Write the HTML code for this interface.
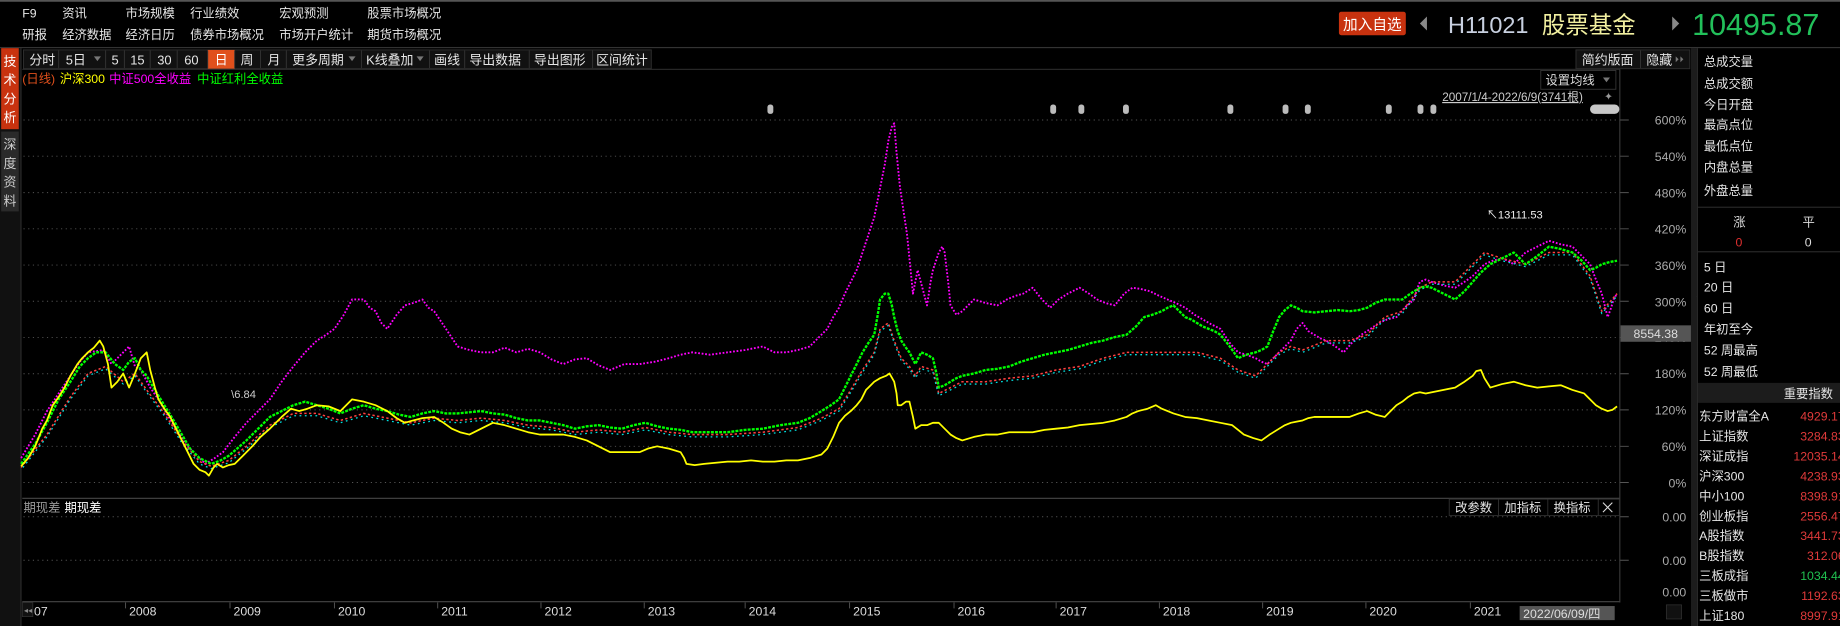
<!DOCTYPE html>
<html><head><meta charset="utf-8"><style>
html,body{margin:0;padding:0;background:#000;width:1840px;height:626px;overflow:hidden}
svg{display:block}
text{font-family:"Liberation Sans","Noto Sans CJK SC",sans-serif;font-size:10.5px}
</style></head><body>
<svg width="1840" height="626" viewBox="0 0 1568 533" preserveAspectRatio="none" xmlns="http://www.w3.org/2000/svg">
<rect width="1568" height="533" fill="#000"/>
<rect x="0" y="0" width="1568" height="1.5" fill="#555"/>
<g fill="#e6e6e6">
<text x="19" y="15">F9</text><text x="53" y="15">资讯</text><text x="107" y="15">市场规模</text><text x="162" y="15">行业绩效</text><text x="238" y="15">宏观预测</text><text x="313" y="15">股票市场概况</text>
<text x="19" y="33">研报</text><text x="53" y="33">经济数据</text><text x="107" y="33">经济日历</text><text x="162" y="33">债券市场概况</text><text x="238" y="33">市场开户统计</text><text x="313" y="33">期货市场概况</text>
</g>
<rect x="1141" y="10" width="57" height="20" rx="2" fill="#c8320f"/>
<text x="1169.5" y="25" fill="#fff" text-anchor="middle" style="font-size:12.5px">加入自选</text>
<path d="M1216 14 L1210 20 L1216 26Z" fill="#888"/>
<text x="1234" y="28" fill="#c8d0e0" style="font-size:20px">H11021</text>
<text x="1314" y="28" fill="#f2f0a0" style="font-size:20px">股票基金</text>
<path d="M1425 14 L1431 20 L1425 26Z" fill="#888"/>
<text x="1442" y="30" fill="#22c05a" style="font-size:26px">10495.87</text>
<rect x="0" y="40" width="1568" height="1" fill="#333"/>
<!-- sidebar -->
<rect x="0" y="41" width="18" height="492" fill="#111"/>
<rect x="17.5" y="41" width="0.8" height="492" fill="#333"/>
<rect x="1" y="41" width="15" height="69" fill="#c8320f"/>
<g fill="#fff"><text x="3" y="56" style="font-size:11px">技</text><text x="3" y="72" style="font-size:11px">术</text><text x="3" y="88" style="font-size:11px">分</text><text x="3" y="104" style="font-size:11px">析</text></g>
<rect x="1" y="112" width="15" height="68" fill="#2a2a2a"/>
<g fill="#ccc"><text x="3" y="127" style="font-size:11px">深</text><text x="3" y="143" style="font-size:11px">度</text><text x="3" y="159" style="font-size:11px">资</text><text x="3" y="175" style="font-size:11px">料</text></g>
<!-- toolbar -->
<g fill="#111" stroke="#2e2e2e" stroke-width="0.8">
<rect x="20" y="42.5" width="535" height="16"/>
<rect x="1343" y="42.5" width="97" height="16"/>
</g>
<rect x="177" y="42.5" width="23" height="16" fill="#e0501c"/>
<g stroke="#333" stroke-width="0.8">
<path d="M50 43v15M90 43v15M106 43v15M128 43v15M151 43v15M177 43v15M200 43v15M222 43v15M244 43v15M308 43v15M366 43v15M396 43v15M451 43v15M505 43v15M1398 43v15"/>
</g>
<g fill="#e6e6e6" style="font-size:11px">
<text x="25" y="55" style="font-size:11px">分时</text><text x="56" y="55" style="font-size:11px">5日</text><text x="95" y="55" style="font-size:11px">5</text><text x="111" y="55" style="font-size:11px">15</text><text x="134" y="55" style="font-size:11px">30</text><text x="157" y="55" style="font-size:11px">60</text><text x="183" y="55" fill="#fff" style="font-size:11px">日</text><text x="205" y="55" style="font-size:11px">周</text><text x="228" y="55" style="font-size:11px">月</text><text x="249" y="55" style="font-size:11px">更多周期</text><text x="312" y="55" style="font-size:11px">K线叠加</text><text x="370" y="55" style="font-size:11px">画线</text><text x="400" y="55" style="font-size:11px">导出数据</text><text x="455" y="55" style="font-size:11px">导出图形</text><text x="508" y="55" style="font-size:11px">区间统计</text>
<text x="1348" y="55" style="font-size:11px">简约版面</text><text x="1403" y="55" style="font-size:11px">隐藏</text>
</g>
<g fill="#777"><path d="M80 48l6 0l-3 4z"/><path d="M297 48l6 0l-3 4z"/><path d="M355 48l6 0l-3 4z"/><path d="M1428 48l2.5 2.5l-2.5 2.5zM1432 48l2.5 2.5l-2.5 2.5z"/></g>
<rect x="19" y="58.6" width="1361" height="0.8" fill="#333"/>
<!-- legend -->
<text x="19" y="70.5" fill="#e0501c">(日线)</text><text x="51" y="70.5" fill="#ffff00">沪深300</text><text x="93" y="70.5" fill="#ff00ff">中证500全收益</text><text x="168" y="70.5" fill="#00ff00">中证红利全收益</text>
<rect x="1313" y="60" width="64" height="16" fill="#000" stroke="#333" stroke-width="0.8"/>
<text x="1317" y="72" fill="#ddd">设置均线</text><path d="M1366 66l6 0l-3 4z" fill="#777"/>
<text x="1229" y="86" fill="#ccc" text-decoration="underline" style="font-size:10px">2007/1/4-2022/6/9(3741根)</text>
<text x="1367" y="85" fill="#999" style="font-size:9px">✦</text>
<rect x="1355" y="89" width="25" height="8" rx="4" fill="#c8c8c8"/>
<g fill="#bbb"><rect x="654" y="89" width="5" height="8" rx="2.2"/><rect x="895" y="89" width="5" height="8" rx="2.2"/><rect x="919" y="89" width="5" height="8" rx="2.2"/><rect x="957" y="89" width="5" height="8" rx="2.2"/><rect x="1046" y="89" width="5" height="8" rx="2.2"/><rect x="1093" y="89" width="5" height="8" rx="2.2"/><rect x="1112" y="89" width="5" height="8" rx="2.2"/><rect x="1181" y="89" width="5" height="8" rx="2.2"/><rect x="1208" y="89" width="5" height="8" rx="2.2"/><rect x="1219" y="89" width="5" height="8" rx="2.2"/></g>
<!-- grid -->
<g stroke="#555" stroke-width="0.8" stroke-dasharray="1 3">
<path d="M20 102.2H1380M20 133H1380M20 164H1380M20 194.8H1380M20 225.7H1380M20 256.5H1380M20 287.4H1380M20 318.2H1380M20 349H1380M20 380H1380M20 410.8H1380"/>
<path d="M20 440H1380M20 477H1380"/>
</g>
<g stroke="#555" stroke-width="0.8"><path d="M1380 102.2h8M1380 133h8M1380 164h8M1380 194.8h8M1380 225.7h8M1380 256.5h8M1380 287.4h8M1380 318.2h8M1380 349h8M1380 380h8M1380 410.8h8M1380 440h8M1380 477h8"/></g>
<rect x="1380" y="59" width="0.8" height="454" fill="#444"/>
<g fill="#aaa" text-anchor="end">
<text x="1437" y="106">600%</text><text x="1437" y="137">540%</text><text x="1437" y="168">480%</text><text x="1437" y="199">420%</text><text x="1437" y="230">360%</text><text x="1437" y="261">300%</text><text x="1437" y="291">240%</text><text x="1437" y="322">180%</text><text x="1437" y="353">120%</text><text x="1437" y="384">60%</text><text x="1437" y="415">0%</text>
<text x="1437" y="444">0.00</text><text x="1437" y="481">0.00</text><text x="1437" y="508">0.00</text>
</g>
<rect x="1381" y="277" width="60" height="14" fill="#555"/>
<text x="1411" y="288" fill="#ddd" text-anchor="middle">8554.38</text>
<path d="M1442 249l4 3.5l-4 3.5z" fill="#bbb"/>
<rect x="1441" y="41" width="5" height="492" fill="#1c1c1c"/>
<!-- series -->
<g fill="none" stroke-linejoin="round">
<polyline stroke="#ff00ff" stroke-width="1.6" stroke-dasharray="1.5 1.5" points="18,390 30,370 40,350 50,335 60,320 68,308 75,300 88,298 95,310 100,305 110,295 115,312 120,315 128,330 135,340 142,352 150,365 158,378 165,385 175,395 183,390 190,385 200,372 210,360 220,350 230,340 240,325 250,312 260,300 270,290 278,285 285,280 293,268 300,255 310,255 315,262 320,265 325,275 330,280 338,268 345,260 352,258 360,255 365,262 370,265 380,280 390,295 400,298 410,300 420,300 430,296 440,300 450,297 460,300 470,306 480,310 490,306 500,305 510,311 520,315 532,310 545,310 558,308 570,305 580,302 590,300 605,302 620,300 635,298 650,295 660,300 670,300 680,298 690,295 700,285 705,280 710,270 715,262 720,250 725,240 730,230 735,215 740,200 745,185 750,160 754,140 757,120 760,108 762,105 764,130 767,160 770,180 773,200 776,230 778,250 780,240 782,230 786,245 790,260 793,240 795,230 800,215 803,210 805,215 808,240 810,260 815,268 820,265 825,260 830,255 840,258 850,260 858,255 865,252 872,250 880,245 888,255 895,262 902,255 910,250 920,245 928,250 935,255 942,258 950,260 958,250 965,245 972,246 980,248 988,252 995,255 1002,258 1010,262 1018,268 1025,272 1032,276 1040,280 1048,292 1055,300 1062,302 1070,305 1075,308 1080,310 1085,305 1090,300 1095,295 1100,290 1105,280 1110,275 1115,282 1120,285 1125,288 1130,290 1138,295 1145,300 1152,292 1160,285 1168,280 1175,275 1182,272 1190,270 1197,262 1205,255 1208,245 1210,240 1215,238 1220,240 1230,243 1240,245 1248,240 1255,235 1260,230 1265,225 1272,222 1280,220 1285,222 1290,225 1295,220 1300,215 1310,210 1320,205 1330,208 1340,210 1348,218 1355,225 1360,238 1365,250 1368,262 1370,270 1373,262 1375,255 1378,250"/>
<polyline stroke="#ff4040" stroke-width="1.3" stroke-dasharray="2 2" points="18,398 40,370 60,338 75,318 90,312 105,325 115,318 125,332 140,352 155,375 170,393 180,397 195,392 210,380 230,362 250,352 270,352 290,358 310,352 330,356 350,360 370,356 390,358 410,356 430,358 450,362 470,364 490,368 510,366 530,368 550,364 570,368 590,370 620,370 650,368 680,364 700,356 715,348 725,332 735,315 745,300 750,280 757,275 762,290 768,305 775,312 780,320 785,312 795,315 800,335 810,330 820,325 840,325 860,322 880,320 900,315 920,312 940,305 960,300 980,300 1000,300 1020,300 1040,305 1055,315 1070,320 1080,310 1090,300 1100,295 1110,298 1130,290 1150,290 1165,285 1180,270 1195,265 1210,245 1220,240 1240,240 1255,225 1265,215 1280,220 1300,225 1320,215 1340,215 1355,235 1365,265 1378,250"/>
<polyline stroke="#00e0e0" stroke-width="1.1" stroke-dasharray="1.5 3" stroke-dashoffset="2" points="18,400 40,372 60,340 75,320 90,314 105,327 115,320 125,334 140,354 155,377 170,395 180,399 195,394 210,382 230,364 250,354 270,354 290,360 310,354 330,358 350,362 370,358 390,360 410,358 430,360 450,364 470,366 490,370 510,368 530,370 550,366 570,370 590,372 620,372 650,370 680,366 700,358 715,350 725,334 735,317 745,302 750,282 757,277 762,292 768,307 775,314 780,322 785,314 795,317 800,337 810,332 820,327 840,327 860,324 880,322 900,317 920,314 940,307 960,302 980,302 1000,302 1020,302 1040,307 1055,317 1070,322 1080,312 1090,302 1100,297 1110,300 1130,292 1150,292 1165,287 1180,272 1195,267 1210,247 1220,242 1240,242 1255,227 1265,217 1280,222 1300,227 1320,217 1340,217 1355,237 1365,267 1378,252"/>
<polyline stroke="#00ff00" stroke-width="2" stroke-dasharray="2.5 1" points="18,395 30,378 40,360 50,340 60,325 68,312 75,305 82,300 90,300 98,310 105,315 110,308 115,305 120,315 125,320 132,332 140,345 148,358 155,370 162,382 170,390 180,395 188,392 195,388 202,382 210,375 220,365 230,355 240,350 250,345 260,342 270,345 280,348 290,352 300,348 310,345 320,348 330,350 340,353 350,355 360,352 370,350 380,352 390,352 400,351 410,350 420,352 430,353 440,356 450,358 460,358 470,360 480,362 490,365 500,363 510,362 520,364 530,365 540,362 550,360 560,363 570,365 580,366 590,368 605,368 620,368 635,366 650,365 665,362 680,360 690,356 700,350 708,345 715,340 720,330 725,320 730,310 735,300 740,292 745,285 748,268 750,255 754,250 757,250 760,260 762,270 765,282 768,290 772,296 775,300 778,306 780,310 783,304 785,300 790,302 795,305 798,318 800,330 805,328 810,325 815,322 820,320 830,318 840,315 850,314 860,312 870,308 880,305 890,302 900,300 910,298 920,295 930,292 940,290 950,287 960,285 968,278 975,270 982,268 990,265 995,262 1000,260 1005,265 1010,270 1015,272 1020,275 1025,278 1030,280 1035,282 1040,285 1048,295 1055,305 1062,302 1070,300 1075,298 1080,295 1085,282 1090,270 1095,264 1100,260 1105,262 1110,265 1120,266 1130,265 1140,264 1150,265 1158,264 1165,262 1172,258 1180,255 1188,255 1195,255 1202,250 1210,245 1215,244 1220,245 1230,250 1240,255 1248,248 1255,240 1262,232 1270,225 1280,220 1290,215 1295,220 1300,225 1310,218 1320,210 1330,212 1340,215 1348,222 1355,230 1360,228 1365,225 1372,223 1378,222"/>
<polyline stroke="#ffff00" stroke-width="1.5" points="18,397 24,390 30,380 36,365 40,358 45,345 50,338 55,330 60,320 66,310 70,305 75,300 80,296 85,290 88,295 92,310 95,330 100,325 105,318 110,330 115,318 120,305 125,300 128,315 132,330 135,340 140,348 145,355 150,365 155,375 160,385 165,395 170,400 175,402 178,405 182,398 185,395 190,398 195,396 200,395 207,388 215,380 222,372 230,365 240,355 248,348 255,350 262,348 270,345 280,346 290,350 295,345 300,340 310,342 320,345 330,350 338,356 345,360 352,358 360,356 370,355 378,360 385,365 392,368 400,370 410,365 420,360 430,362 440,365 450,368 460,370 470,370 480,370 490,372 500,375 510,380 520,385 530,385 545,385 552,382 560,380 570,382 580,385 583,390 585,395 592,396 600,395 610,394 620,393 630,393 640,392 650,393 660,393 670,392 680,392 690,390 700,387 705,382 710,372 715,360 720,354 725,350 730,345 734,340 738,332 740,330 745,325 750,322 755,320 758,318 762,325 764,335 765,345 768,345 772,342 775,342 778,355 780,365 785,362 790,362 795,360 800,360 805,365 810,370 815,373 820,375 830,372 840,370 850,370 860,368 870,368 880,368 890,366 900,365 910,364 920,362 930,361 940,360 950,358 960,355 965,352 970,350 978,348 985,345 990,348 995,350 1000,352 1010,355 1020,356 1030,358 1040,360 1050,362 1055,366 1060,370 1068,373 1075,375 1082,370 1090,365 1095,362 1100,360 1105,359 1110,358 1115,356 1120,355 1128,355 1135,355 1143,355 1150,355 1158,352 1165,350 1172,353 1180,355 1185,350 1190,345 1195,342 1200,338 1205,335 1210,334 1215,335 1225,333 1235,331 1240,330 1248,325 1255,320 1258,316 1262,315 1265,322 1270,330 1280,327 1290,325 1300,328 1310,330 1320,329 1330,328 1340,332 1350,335 1355,340 1360,345 1365,348 1370,350 1374,349 1378,346"/>
</g>
<text x="1267" y="186" fill="#eee" style="font-size:9.5px">↖13111.53</text>
<text x="197" y="339" fill="#ccc" style="font-size:9.5px">\6.84</text>
<!-- lower panel -->
<rect x="19" y="423.8" width="1361" height="1" fill="#444"/>
<text x="20" y="436" fill="#999">期现差</text><text x="55" y="436" fill="#fff">期现差</text>
<rect x="1235" y="425" width="145" height="14" fill="#000" stroke="#2e2e2e" stroke-width="0.8"/>
<path d="M1277 425v14M1319 425v14M1362 425v14" stroke="#2e2e2e" stroke-width="0.8"/>
<g fill="#e6e6e6"><text x="1240" y="436">改参数</text><text x="1282" y="436">加指标</text><text x="1324" y="436">换指标</text></g>
<path d="M1366 428l8 8M1374 428l-8 8" stroke="#ddd" stroke-width="0.9"/>
<!-- timeline -->
<rect x="19" y="511.8" width="1361" height="1" fill="#444"/>
<rect x="19" y="513" width="9" height="12" fill="#111" stroke="#333" stroke-width="0.6"/>
<text x="20.5" y="522" fill="#888" style="font-size:7px">◂◂</text>
<g stroke="#555" stroke-width="0.8"><path d="M107 513v5M196 513v5M285 513v5M373 513v5M461 513v5M549 513v5M635 513v5M724 513v5M813 513v5M900 513v5M988 513v5M1076 513v5M1164 513v5M1253 513v5"/></g>
<g fill="#ddd">
<text x="29" y="524">07</text><text x="110" y="524">2008</text><text x="199" y="524">2009</text><text x="288" y="524">2010</text><text x="376" y="524">2011</text><text x="464" y="524">2012</text><text x="552" y="524">2013</text><text x="638" y="524">2014</text><text x="727" y="524">2015</text><text x="816" y="524">2016</text><text x="903" y="524">2017</text><text x="991" y="524">2018</text><text x="1079" y="524">2019</text><text x="1167" y="524">2020</text><text x="1256" y="524">2021</text>
</g>
<rect x="1295" y="516" width="81" height="12" fill="#555"/>
<text x="1298" y="526" fill="#ddd">2022/06/09/四</text>
<rect x="1420" y="515" width="13" height="12" fill="#111" stroke="#333" stroke-width="0.6"/>
<!-- right panel -->
<rect x="1446" y="41" width="0.8" height="492" fill="#333"/>
<g fill="#e6e6e6">
<text x="1452" y="56">总成交量</text><text x="1452" y="75">总成交额</text><text x="1452" y="93">今日开盘</text><text x="1452" y="110">最高点位</text><text x="1452" y="128">最低点位</text><text x="1452" y="146">内盘总量</text><text x="1452" y="166">外盘总量</text>
</g>
<rect x="1447" y="176" width="121" height="0.8" fill="#333"/>
<text x="1477" y="193" fill="#ddd">涨</text><text x="1536" y="193" fill="#ddd">平</text>
<text x="1479" y="210" fill="#e03030">0</text><text x="1538" y="210" fill="#ddd">0</text>
<rect x="1447" y="214" width="121" height="0.8" fill="#333"/>
<g fill="#e6e6e6">
<text x="1452" y="231">5 日</text><text x="1452" y="248">20 日</text><text x="1452" y="266">60 日</text><text x="1452" y="284">年初至今</text><text x="1452" y="302">52 周最高</text><text x="1452" y="320">52 周最低</text>
</g>
<rect x="1447" y="326" width="121" height="17" fill="#1c1c1c"/>
<text x="1562" y="339" fill="#e6e6e6" text-anchor="end">重要指数</text>
<g fill="#e6e6e6">
<text x="1448" y="358">东方财富全A</text><text x="1448" y="375">上证指数</text><text x="1448" y="392">深证成指</text><text x="1448" y="409">沪深300</text><text x="1448" y="426">中小100</text><text x="1448" y="443">创业板指</text><text x="1448" y="460">A股指数</text><text x="1448" y="477">B股指数</text><text x="1448" y="494">三板成指</text><text x="1448" y="511">三板做市</text><text x="1448" y="528">上证180</text>
</g>
<g fill="#e03a3a" text-anchor="end">
<text x="1572" y="358">4929.17</text><text x="1572" y="375">3284.83</text><text x="1572" y="392">12035.14</text><text x="1572" y="409">4238.93</text><text x="1572" y="426">8398.91</text><text x="1572" y="443">2556.47</text><text x="1572" y="460">3441.73</text><text x="1572" y="477">312.06</text><text x="1572" y="494" fill="#20c050">1034.44</text><text x="1572" y="511">1192.63</text><text x="1572" y="528">8997.91</text>
</g>
</svg>
</body></html>
